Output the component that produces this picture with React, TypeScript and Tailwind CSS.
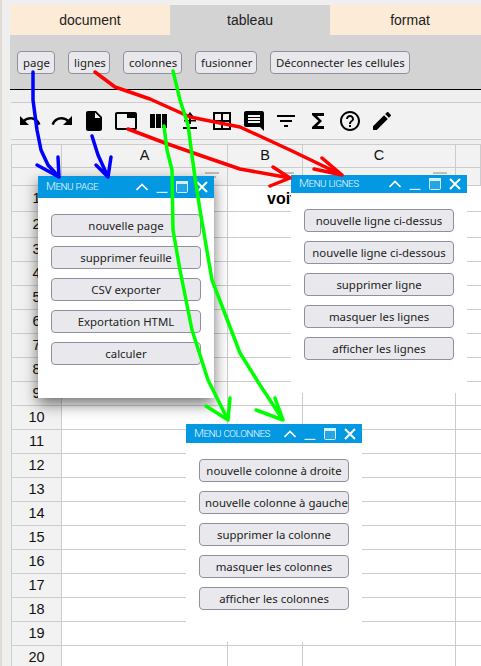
import React from "react";
import {
  MdUndo, MdRedo, MdInsertDriveFile, MdTab, MdBorderAll, MdMessage,
  MdFilterList, MdFunctions, MdHelpOutline, MdEdit,
} from "react-icons/md";

const Filter = () => (
  <span className="mb-[3px] flex flex-col items-center gap-[2px]">
    <span className="block h-[2px] w-[14px] bg-[#bdbdbd]" />
    <span className="block h-[2px] w-[8px] bg-[#bdbdbd]" />
  </span>
);

const rows = Array.from({ length: 20 }, (_, i) => i + 1);
const cell = "border-b border-r border-[#cccccc]";

function Sheet() {
  return (
    <div className="ml-[1px] flex flex-col border-l border-t border-[#cccccc] bg-white text-[14.5px] text-[#111] [font-family:'Liberation_Sans',sans-serif]">
      <div className="grid h-[23px] grid-cols-[50px_166px_75px_153px_1fr]">
        <div className={`${cell} bg-[#f2f2f2]`} />
        {["A", "B", "C", ""].map((c, i) => (
          <div key={i} className={`${cell} flex items-center justify-center bg-[#f2f2f2]`}>{c}</div>
        ))}
      </div>
      <div className="grid h-[18px] grid-cols-[50px_166px_75px_153px_1fr]">
        <div className={`${cell} bg-[#f2f2f2]`} />
        {[0, 1, 2].map((c) => (
          <div key={c} className={`${cell} flex items-center justify-end bg-[#f2f2f2] pr-[8px]`}>
            <Filter />
          </div>
        ))}
        <div className={`${cell} bg-[#f2f2f2]`} />
      </div>
      {rows.map((r) => (
        <div
          key={r}
          className={`grid grid-cols-[50px_166px_75px_153px_1fr] ${r < 3 ? "h-[26px]" : "h-6"}`}
        >
          <div className={`${cell} flex items-center justify-center bg-[#f2f2f2]`}>{r}</div>
          <div className={cell} />
          <div className={`${cell} flex items-center pl-[39px] text-[16px] font-bold text-black`}>
            {r === 1 ? <span className="whitespace-nowrap">voiture</span> : null}
          </div>
          <div className={cell} />
          <div className="border-b border-[#cccccc]" />
        </div>
      ))}
    </div>
  );
}

function Btn({ label, className }: { label: string; className: string }) {
  return (
    <button
      className={`h-[23px] shrink-0 whitespace-nowrap rounded-[4px] border border-[#8f8f9d] bg-[#e9e9ed] px-[5px] text-center text-[11.4px] text-[#222] [font-family:'Noto_Sans',sans-serif] ${className}`}
    >
      {label}
    </button>
  );
}

function Win({
  title,
  items,
  className,
  bar,
}: {
  title: string;
  items: string[];
  className: string;
  bar: string;
}) {
  return (
    <div className={`absolute w-[176px] bg-white ${className}`}>
      <div className={`flex items-center justify-between bg-[#0398e2] pl-[8px] pr-[6px] text-[11.5px] font-light tracking-[-0.5px] text-[#e3f4fd] [font-family:'Roboto',sans-serif] [font-variant:small-caps] ${bar}`}>
        <span className="whitespace-nowrap">{title}</span>
        <span className="flex items-center gap-[8px]">
          <svg width="12" height="8" viewBox="0 0 12 8" fill="none" stroke="white" strokeWidth="1.6">
            <path d="M0.5 7 L6 1.5 L11.5 7" />
          </svg>
          <svg width="12" height="12" viewBox="0 0 12 12" fill="none" stroke="#d5effc" strokeWidth="1.4">
            <path d="M0.5 11.5 H11.5" />
          </svg>
          <svg width="12" height="12" viewBox="0 0 12 12" fill="#ffffff22" stroke="#d5effc" strokeWidth="1">
            <rect x="0.5" y="0.5" width="11" height="11" rx="1" />
            <rect x="0" y="0" width="12" height="3" fill="#d5effc" stroke="none" />
          </svg>
          <svg width="12" height="12" viewBox="0 0 12 12" fill="none" stroke="white" strokeWidth="2">
            <path d="M1 1 L11 11 M11 1 L1 11" />
          </svg>
        </span>
      </div>
      <div className="flex flex-col items-center gap-[9px] pt-[16px]">
        {items.map((t) => (
          <Btn key={t} label={t} className="w-[150px]" />
        ))}
      </div>
    </div>
  );
}

const AlignIcon = () => (
  <svg width="24" height="24" viewBox="0 0 24 24">
    <path d="M12 3 L16 8 H13 V15 H11 V8 H8 Z" />
    <path d="M6 11 H18 V12.5 H6 Z M5 18 H19 V20 H5 Z" />
  </svg>
);

const WeekIcon = () => (
  <svg width="24" height="24" viewBox="0 0 24 24">
    <path d="M4 5h5v14H4z M10 5h5v14h-5z M16 5h5v14h-5z" />
  </svg>
);

const Arrows = () => (
  <svg className="pointer-events-none absolute inset-0" width="481" height="666" fill="none" strokeLinecap="round" strokeLinejoin="round">
    <g stroke="#0000ff" strokeWidth="3.5">
      <path d="M33 72 L33 100 L37 130 L41 150 L48 165 L59 177 M37 165 L59 177 L58 157" />
      <path d="M92 136 L98 155 L108 177 M96 165 L108 177 L111 157" />
    </g>
    <g stroke="#ff0000" strokeWidth="3.5">
      <path d="M95 72 L115 87 L150 99 L190 117 L240 127 L290 150 L342 175 M322 158 L342 175 L314 169" />
      <path d="M128 129 L165 143 L205 157 L240 169 L290 178 M273 167 L290 178 L270 186" />
    </g>
    <g stroke="#00ff00" strokeWidth="3.5">
      <path d="M164 126 L167 150 L172 170 L173 230 L180 270 L192 330 L208 380 L228 420 M206 406 L228 420 L230 398" />
      <path d="M173 71 L180 100 L188 125 L195 178 L200 210 L212 280 L240 353 L260 385 L283 420 M256 410 L283 420 L275 398" />
    </g>
  </svg>
);

export default function App() {
  const icons = [
    <MdUndo size={24} />,
    <MdRedo size={24} />,
    <MdInsertDriveFile size={24} />,
    <MdTab size={24} />,
    <WeekIcon />,
    <AlignIcon />,
    <MdBorderAll size={24} />,
    <MdMessage size={24} className="-scale-x-100" />,
    <MdFilterList size={24} />,
    <MdFunctions size={24} />,
    <MdHelpOutline size={24} />,
    <MdEdit size={24} />,
  ];
  return (
    <div className="relative h-[666px] w-[481px] overflow-hidden bg-[#efefef]">
      <div className="absolute inset-y-0 left-0 w-[2px] bg-[#e0dbd4]" />
      <div className="ml-[10px] pt-[5px]">
        <div className="grid h-[30px] grid-cols-[160px_160px_160px] text-[14px] text-[#222] [font-family:'Liberation_Sans',sans-serif]">
          <div className="flex items-center justify-center bg-[#fbebd7]">document</div>
          <div className="flex items-center justify-center bg-[#d3d3d3]">tableau</div>
          <div className="flex items-center justify-center bg-[#fbebd7]">format</div>
        </div>
        <div className="flex h-[55px] items-start gap-[13px] border-b border-black bg-[#d3d3d3] pl-[7px] pt-[16px]">
          <Btn label="page" className="w-[38px]" />
          <Btn label="lignes" className="w-[42px]" />
          <Btn label="colonnes" className="w-[59px]" />
          <Btn label="fusionner" className="w-[62px]" />
          <Btn label="Déconnecter les cellules" className="w-[140px]" />
        </div>
        <div className="mt-[12px] ml-[1px] flex h-[38px] items-center border-y border-[#cccccc] bg-[#f2f2f2] pl-[3px]">
          {icons.map((ic, i) => (
            <span key={i} className="flex w-[32px] shrink-0 items-center justify-center text-black">
              {ic}
            </span>
          ))}
        </div>
        <div className="mt-[4px]">
          <Sheet />
        </div>
      </div>

      <Win
        title="Menu page"
        bar="h-[22px]"
        className="left-[38px] top-[176px] h-[222px] shadow-[0_6px_14px_rgba(0,0,0,0.55)]"
        items={["nouvelle page", "supprimer feuille", "CSV exporter", "Exportation HTML", "calculer"]}
      />
      <Win
        title="Menu lignes"
        bar="h-[18px]"
        className="left-[291px] top-[175px] h-[218px]"
        items={["nouvelle ligne ci-dessus", "nouvelle ligne ci-dessous", "supprimer ligne", "masquer les lignes", "afficher les lignes"]}
      />
      <Win
        title="Menu colonnes"
        bar="h-[19px]"
        className="left-[186px] top-[424px] h-[218px]"
        items={["nouvelle colonne à droite", "nouvelle colonne à gauche", "supprimer la colonne", "masquer les colonnes", "afficher les colonnes"]}
      />
      <Arrows />
    </div>
  );
}
